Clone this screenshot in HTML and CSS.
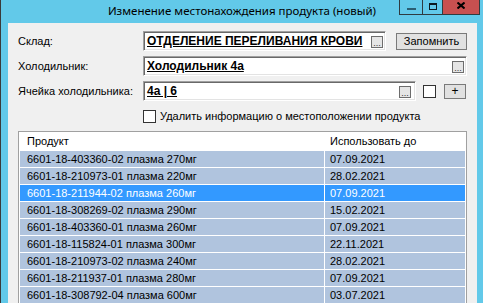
FILE: index.html
```html
<!DOCTYPE html>
<html lang="ru">
<head>
<meta charset="utf-8">
<title>Изменение местонахождения продукта</title>
<link rel="stylesheet" href="styles.css">
</head>
<body>
<div class="window">
  <div class="titlebar">
    <div class="tb-spacer"></div>
    <div class="title">Изменение местонахождения продукта (новый)</div>
    <div class="caption">
      <div class="cbtn cmin"><span class="min-glyph"></span></div>
      <div class="cbtn cmax"><span class="max-glyph"></span></div>
      <div class="cbtn cclose">
        <svg width="8" height="7" viewBox="0 0 8 7"><path d="M0.5 0.5 L7.5 6.5 M7.5 0.5 L0.5 6.5" stroke="#000" stroke-width="2"/></svg>
      </div>
    </div>
  </div>
  <div class="client">
    <div class="form">
      <div class="frow">
        <div class="lbl">Склад:</div>
        <div class="field f1"><span class="val">ОТДЕЛЕНИЕ ПЕРЕЛИВАНИЯ КРОВИ</span><span class="dots">...</span></div>
        <div class="btn remember">Запомнить</div>
      </div>
      <div class="frow">
        <div class="lbl">Холодильник:</div>
        <div class="field f2"><span class="val">Холодильник 4а</span><span class="dots">...</span></div>
      </div>
      <div class="frow">
        <div class="lbl">Ячейка холодильника:</div>
        <div class="field f3"><span class="val">4а | 6</span><span class="dots">...</span></div>
        <div class="chk chk-small"></div>
        <div class="btn plus">+</div>
      </div>
      <div class="frow">
        <div class="lbl"></div>
        <div class="chk"></div>
        <div class="chk-text">Удалить информацию о местоположении продукта</div>
      </div>
    </div>
    <div class="grid">
      <div class="hcell c1">Продукт</div><div class="hcell c2">Использовать до</div>
      <div class="cell c1">6601-18-403360-02 плазма 270мг</div><div class="cell c2">07.09.2021</div>
      <div class="cell c1">6601-18-210973-01 плазма 220мг</div><div class="cell c2">28.02.2021</div>
      <div class="cell c1 sel">6601-18-211944-02 плазма 260мг</div><div class="cell c2 sel">07.09.2021</div>
      <div class="cell c1">6601-18-308269-02 плазма 290мг</div><div class="cell c2">15.02.2021</div>
      <div class="cell c1">6601-18-403360-01 плазма 260мг</div><div class="cell c2">07.09.2021</div>
      <div class="cell c1">6601-18-115824-01 плазма 300мг</div><div class="cell c2">22.11.2021</div>
      <div class="cell c1">6601-18-210973-02 плазма 240мг</div><div class="cell c2">28.02.2021</div>
      <div class="cell c1">6601-18-211937-01 плазма 280мг</div><div class="cell c2">07.09.2021</div>
      <div class="cell c1">6601-18-308792-04 плазма 600мг</div><div class="cell c2">03.07.2021</div>
    </div>
  </div>
</div>
</body>
</html>
```

FILE: styles.css
```css
* { box-sizing: border-box; }
html, body {
  margin: 0;
  padding: 0;
  width: 483px;
  height: 303px;
  overflow: hidden;
  background: #62c9e9;
}
.window {
  width: 483px;
  height: 303px;
  border-left: 1px solid #3a3a3a;
  background: #62c9e9;
  display: flex;
  flex-direction: column;
}
.titlebar {
  height: 23px;
  flex: none;
  display: grid;
  grid-template-columns: 1fr auto 1fr;
  align-items: start;
}
.title {
  font-family: "Noto Sans", "Open Sans", sans-serif;
  font-size: 11.5px;
  line-height: 22px;
  color: #000;
  white-space: nowrap;
}
.caption {
  display: flex;
  justify-content: flex-end;
  padding-right: 3px;
}
.cbtn {
  height: 15px;
  border: 1px solid #2f3b40;
  border-top: none;
  display: flex;
  align-items: center;
  justify-content: center;
}
.cmin { width: 23px; border-right: none; }
.cmax { width: 20px; border-right: none; }
.cclose { width: 38px; background: #c75050; border-color: #2f3b40; }
.min-glyph {
  width: 9px;
  height: 2px;
  background: #2a5f74;
  margin-top: 3px;
}
.max-glyph {
  width: 8px;
  height: 7px;
  border: 1px solid #0c1a20;
  border-top-width: 2px;
  margin-top: -2px;
}
.cclose svg { margin-top: -3px; }

.client {
  flex: 1;
  margin: 0 6px 0 7px;
  background: #f0f0f0;
  padding: 8px 0 0 10px;
  font-family: "Liberation Sans", Arial, sans-serif;
  font-size: 11px;
  color: #000;
  overflow: hidden;
}
.form {
  display: flex;
  flex-direction: column;
  gap: 5px;
}
.frow {
  height: 20px;
  display: flex;
  align-items: center;
}
.lbl {
  width: 125px;
  flex: none;
  white-space: nowrap;
}
.field {
  height: 20px;
  background: #fff;
  border: 1px solid;
  border-color: #a0a0a0 #ffffff #ffffff #a0a0a0;
  box-shadow: inset 1px 1px 0 #696969, inset -1px -1px 0 #e3e3e3;
  display: flex;
  align-items: center;
  padding: 0 2px 0 2px;
  overflow: hidden;
}
.f1 { width: 243px; }
.f2 { width: 324px; }
.f3 { width: 273px; padding-right: 4px; }
.val {
  flex: 1;
  min-width: 0;
  overflow: hidden;
  white-space: nowrap;
  font-weight: bold;
  font-size: 12px;
  text-decoration: underline;
  padding-left: 1px;
}
.dots {
  flex: none;
  width: 12px;
  height: 12px;
  border: 1px solid #6d6d6d;
  background: #e5e5e5;
  font-size: 9px;
  line-height: 12px;
  text-align: center;
  color: #333;
  margin-top: 1px;
}
.btn {
  background: #e1e1e1;
  border: 1px solid #7a7a7a;
  display: flex;
  align-items: center;
  justify-content: center;
}
.remember {
  width: 71px;
  height: 17px;
  margin-left: 10px;
  font-size: 11px;
}
.chk {
  width: 13px;
  height: 13px;
  background: #fff;
  border: 1px solid #333;
  flex: none;
}
.chk-small { margin-left: 7px; }
.plus {
  width: 22px;
  height: 15px;
  margin-left: 8px;
  font-size: 12px;
}
.chk-text {
  margin-left: 4px;
  white-space: nowrap;
}
.grid {
  margin-top: 5px;
  width: 449px;
  border: 1px solid #a0a0a0;
  background: #fff;
  padding: 1px;
  display: grid;
  grid-template-columns: 304px 1fr;
  grid-auto-rows: 16px;
  grid-template-rows: 17px;
  gap: 1px;
}
.hcell {
  background: #fff;
  line-height: 17px;
  white-space: nowrap;
}
.cell {
  background: #b0c4de;
  line-height: 16px;
  white-space: nowrap;
}
.c1 { padding-left: 7px; }
.c2 { padding-left: 5px; }
.sel { background: #3399ff; color: #fff; }
```
